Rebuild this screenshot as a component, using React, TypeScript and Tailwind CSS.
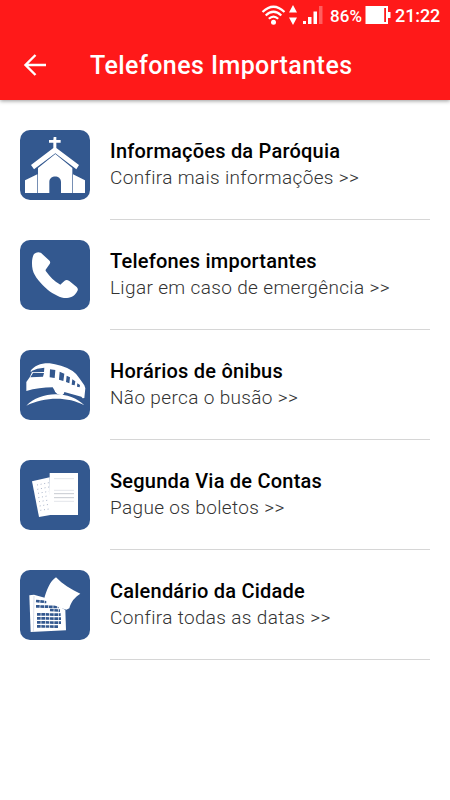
import React from 'react';

interface MenuItem {
  title: string;
  subtitle: string;
  icon: React.ReactNode;
}

const ChurchIcon: React.FC = () => (
  <>
    <path d="M116 36h8v9h13v8h-13v16l68 51-8 13-63-48-64 48-9-13 67-51V53h-13v-8h13z" />
    <path d="M69 129l52-42 51 42v75h-34v-33c0-22-35-22-35 0v33H69z" />
    <path d="M30 166l37-18v56H30zM174 148l36 18v38h-36z" />
  </>
);

const PhoneIcon: React.FC = () => (
  <path d="M57 57Q66 49 77 53Q80 54 84 59L102 76Q108 81 104 87L93 103Q90 106 94 110C104 125 118 138 134 148Q137 150 139 146L149 137Q155 133 163 138L185 156Q191 162 187 168C181 181 171 188 156 189C138 190 116 178 98 164C79 147 58 125 53 104C49 85 51 67 57 57Z" />
);

const BusIcon: React.FC = () => (
  <>
    <path
      fillRule="evenodd"
      d="M46 79C58 61 79 54 104 55Q119 57 138 62Q178 74 192 98L208 121L211 130L208 159L203 160L199 155L148 141C147 153 136 151 127 147Q119 142 118 135L113 127Q72 127 34 138L34 111L44 97L51 82ZM105 73L104 97L119 99L121 75ZM134 80L132 104L145 108L148 86ZM155 92L153 111L163 115L165 97ZM172 103L170 119L179 121L181 109ZM187 115L186 125L194 127L195 120Z"
    />
    {/* windscreen */}
    <path d="M48 79Q66 69 88 68L87 81L53 82Z" fill="#33588f" />
    <path d="M54 84L87 84L84 95L46 97Z" fill="#33588f" />
    <path d="M34 182C75 138 164 135 208 181C157 153 87 156 34 182Z" />
  </>
);

const DocumentsIcon: React.FC = () => (
  <>
    <path d="M51 79l53-12 2 113-34 6z" />
    <path
      d="M66 90l36-7M67 103l35-7M69 115l33-6M70 128l32-6M72 140l30-5M74 153l28-5M76 166l26-4"
      stroke="#a9b4c9"
      strokeWidth="3"
      strokeDasharray="3 8"
    />
    <path d="M104 54h85v126h-85z" />
    <path d="M117 71h60M117 106h60M117 139h60" stroke="#d5d9df" strokeWidth="2" />
    <path d="M117 116h60M117 128h60" stroke="#abb0b9" strokeWidth="2" />
  </>
);

const CalendarIcon: React.FC = () => (
  <>
    <path d="M43 91l14-2 32 9 62 37 2 61-106 5z" />
    <path d="M57 93l-2 107" stroke="#c6cfdf" strokeWidth="2" />
    <g fill="none" stroke="#33588f" strokeWidth="8" strokeDasharray="11 2">
      <path d="M63 108l31 3" />
      <path d="M63 124l68 2" />
      <path d="M105 135l30 2" />
      <path d="M66 148l71 1" />
      <path d="M66 160l72 1" />
      <path d="M66 172l72 1" />
      <path d="M66 184l64 1" />
    </g>
    <path d="M123 37C143 58 168 74 196 86C178 98 168 110 163 130L154 134C130 126 105 116 87 104C94 76 105 49 123 37Z" />
  </>
);

const items: MenuItem[] = [
  { title: 'Informações da Paróquia', subtitle: 'Confira mais informações >>', icon: <ChurchIcon /> },
  { title: 'Telefones importantes', subtitle: 'Ligar em caso de emergência >>', icon: <PhoneIcon /> },
  { title: 'Horários de ônibus', subtitle: 'Não perca o busão >>', icon: <BusIcon /> },
  { title: 'Segunda Via de Contas', subtitle: 'Pague os boletos >>', icon: <DocumentsIcon /> },
  { title: 'Calendário da Cidade', subtitle: 'Confira todas as datas >>', icon: <CalendarIcon /> },
];

const StatusBar: React.FC = () => (
  <div className="flex h-[30px] items-center justify-end pr-[10px]">
    {/* wifi, data arrows, signal */}
    <svg className="h-[30px] w-[64px]" viewBox="260 0 64 30" fill="white">
      <g fill="none" stroke="white" strokeWidth="2.2">
        <path d="M262.5 12Q273.5 1.5 284.5 12" />
        <path d="M265.7 15.5Q273.5 8 281.3 15.5" />
        <path d="M268.8 18.8Q273.5 14.3 278.2 18.8" />
      </g>
      <circle cx="273.5" cy="22.3" r="2.5" />
      <path d="M293 5l4 7.5h-8zM293 25l-4-7.5h8z" />
      <path d="M303 21h3v3h-3zM308 17h3.5v7H308zM313.5 11.5h3.5V24h-3.5z" />
      <path d="M319 6h3.5v18H319z" fillOpacity=".3" />
    </svg>
    <span className="mt-[2px] ml-[6px] w-[35px] text-[17px] font-medium leading-[30px] tracking-[0.1px] whitespace-nowrap">
      86%
    </span>
    <svg className="h-[30px] w-[27px]" viewBox="365 0 27 30">
      <path d="M365.5 6h22.5v6h2.5v6H388v6h-22.5z" fill="white" />
      <path d="M384.2 8h1.8v14h-1.8z" fill="#ff1919" />
    </svg>
    <span className="mt-[2px] ml-[3px] w-[45px] text-[18px] font-medium leading-[30px] tracking-[-0.1px] whitespace-nowrap">
      21:22
    </span>
  </div>
);

const Header: React.FC = () => (
  <header className="h-[100px] bg-[#ff1919] text-white shadow-[0_1px_4px_rgba(0,0,0,0.4)]">
    <StatusBar />
    <div className="flex h-[70px] items-center pl-[23px]">
      <svg className="h-6 w-6" viewBox="0 0 24 24" fill="none" stroke="white" strokeWidth="2.4">
        <path d="M23 12H3M12.5 2L2.5 12l10 10" />
      </svg>
      <h1 className="mt-[2px] ml-[43px] text-[25px] font-medium leading-[30px] tracking-[0.43px] whitespace-nowrap">
        Telefones Importantes
      </h1>
    </div>
  </header>
);

const MenuRow: React.FC<{ item: MenuItem }> = ({ item }) => (
  <li className="flex h-[110px] items-start gap-5">
    <div className="h-[70px] w-[70px] shrink-0 overflow-hidden rounded-[10px] bg-[#33588f]">
      <svg className="h-full w-full" viewBox="15 15 210 210" fill="white">
        {item.icon}
      </svg>
    </div>
    <div className="h-[90px] flex-1 border-b border-[#d6d6d6] pt-[8px]">
      <h2 className="text-[20px] font-medium leading-[27px] tracking-[0.22px] text-black">{item.title}</h2>
      <p className="text-[19px] font-light leading-[26px] tracking-[0.35px] text-[#333333]">{item.subtitle}</p>
    </div>
  </li>
);

const App: React.FC = () => {
  return (
    <div className="min-h-screen bg-white font-[Roboto,sans-serif]">
      <Header />
      <ul className="px-5 pt-[30px]">
        {items.map((item) => (
          <MenuRow key={item.title} item={item} />
        ))}
      </ul>
    </div>
  );
};

export default App;
